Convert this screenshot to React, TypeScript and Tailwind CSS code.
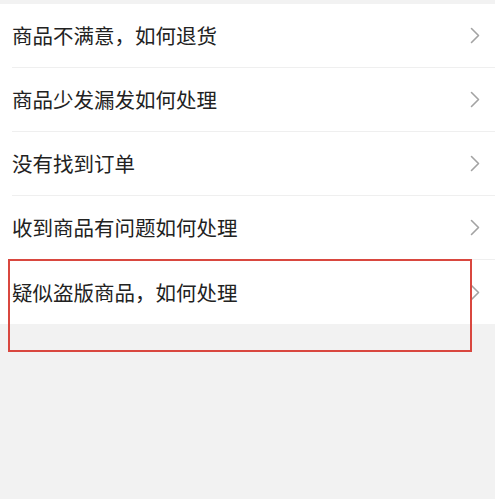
import React from "react";

const questions = [
  "商品不满意，如何退货",
  "商品少发漏发如何处理",
  "没有找到订单",
  "收到商品有问题如何处理",
  "疑似盗版商品，如何处理",
];

const Chevron = () => (
  <svg width="10" height="17" viewBox="0 0 10 17" fill="none" className="shrink-0">
    <polyline points="1.5,1.5 8.5,8.5 1.5,15.5" stroke="#a3a3a3" strokeWidth="1.6" strokeLinecap="round" strokeLinejoin="round" />
  </svg>
);

export default function App() {
  return (
    <div
      className="relative min-h-screen w-full bg-[#f2f2f2] pt-[4px]"
      style={{ fontFamily: '"Noto Sans CJK SC", "Noto Sans", sans-serif' }}
    >
      <ul className="bg-white">
        {questions.map((q, i) => (
          <li key={i} className="h-16 pl-3">
            <div
              className={`flex h-full items-center justify-between pr-[15px] ${
                i < questions.length - 1 ? "border-b border-[#efefef]" : ""
              }`}
            >
              <span className="text-[20.5px] leading-none text-[#222222]">{q}</span>
              <Chevron />
            </div>
          </li>
        ))}
      </ul>
      {/* annotation box */}
      <div className="absolute left-2 top-[259px] h-[93px] w-[464px] border-2 border-[#d9473f]" />
    </div>
  );
}
